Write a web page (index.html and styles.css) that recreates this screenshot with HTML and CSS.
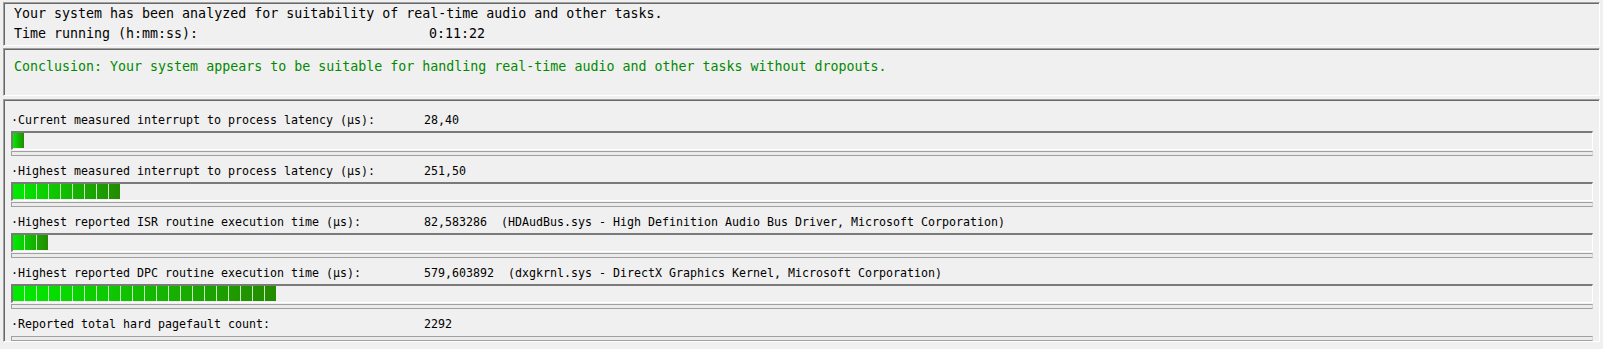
FILE: index.html
```html
<!DOCTYPE html>
<html lang="en">
<head>
    <meta charset="UTF-8">
    <title>LatencyMon - Main</title>
    <link rel="stylesheet" href="styles.css">
</head>
<body>

<div class="panel summary">
    <div class="line">Your system has been analyzed for suitability of real-time audio and other tasks.</div>
    <div class="line"><span class="key-time">Time running (h:mm:ss):</span>0:11:22</div>
</div>

<div class="panel conclusion">
    <div class="line ok">Conclusion: Your system appears to be suitable for handling real-time audio and other tasks without dropouts.</div>
</div>

<div class="panel metrics">
    <div class="metric">
        <div class="metric-label"><span class="key">·Current measured interrupt to process latency (µs):</span>28,40</div>
        <div class="meter"><div class="meter-fill" style="width: 11px"></div></div>
        <div class="rule"></div>
    </div>
    <div class="metric">
        <div class="metric-label"><span class="key">·Highest measured interrupt to process latency (µs):</span>251,50</div>
        <div class="meter"><div class="meter-fill" style="width: 107px"></div></div>
        <div class="rule"></div>
    </div>
    <div class="metric">
        <div class="metric-label"><span class="key">·Highest reported ISR routine execution time (µs):</span>82,583286  (HDAudBus.sys - High Definition Audio Bus Driver, Microsoft Corporation)</div>
        <div class="meter"><div class="meter-fill" style="width: 35px"></div></div>
        <div class="rule"></div>
    </div>
    <div class="metric">
        <div class="metric-label"><span class="key">·Highest reported DPC routine execution time (µs):</span>579,603892  (dxgkrnl.sys - DirectX Graphics Kernel, Microsoft Corporation)</div>
        <div class="meter"><div class="meter-fill" style="width: 263px"></div></div>
        <div class="rule"></div>
    </div>
    <div class="metric">
        <div class="metric-label"><span class="key">·Reported total hard pagefault count:</span>2292</div>
        <div class="rule"></div>
    </div>
</div>

</body>
</html>
```

FILE: styles.css
```css
body {
    margin: 0;
    padding: 2px 3px 0 3px;
    background-color: #f0f0f0;
    font-family: "DejaVu Sans Mono", "Liberation Mono", monospace;
    font-size: 13.3px;
    color: #000;
    overflow: hidden;
}

.panel {
    border-top: 1px solid #a0a0a0;
    border-left: 1px solid #a0a0a0;
    border-right: 1px solid #fff;
    border-bottom: 1px solid #fff;
    box-shadow: inset 1px 1px 0 #696969;
    background-color: #f0f0f0;
}

.line {
    line-height: 20px;
    white-space: pre;
}

.summary {
    padding: 1px 10px 1px 10px;
    margin-bottom: 2px;
}

.conclusion {
    padding: 8px 10px 18px 10px;
    margin-bottom: 3px;
}

.ok {
    color: #008a00;
}

.key-time {
    display: inline-block;
    width: 415px;
}

.metrics {
    padding: 5px 6px 0 7px;
    font-size: 11.63px;
}

.metric-label {
    height: 22px;
    padding-top: 4px;
    line-height: 22px;
    white-space: pre;
}

.key {
    display: inline-block;
    width: 413px;
}

.meter {
    height: 16px;
    border-top: 2px solid #7a7a7a;
    border-left: 2px solid #7a7a7a;
    border-right: 1px solid #fff;
    border-bottom: 1px solid #fff;
}

.meter-fill {
    height: 15px;
    background:
        repeating-linear-gradient(to right, transparent 0, transparent 11px, rgba(235, 250, 235, 0.85) 11px, rgba(235, 250, 235, 0.85) 12px),
        linear-gradient(to right, #00ec00, #248a00);
}

.rule {
    height: 3px;
    margin-top: 1px;
    border: 1px solid #a0a0a0;
    border-right-color: #d8d8d8;
    background-color: #ebebeb;
}
```
